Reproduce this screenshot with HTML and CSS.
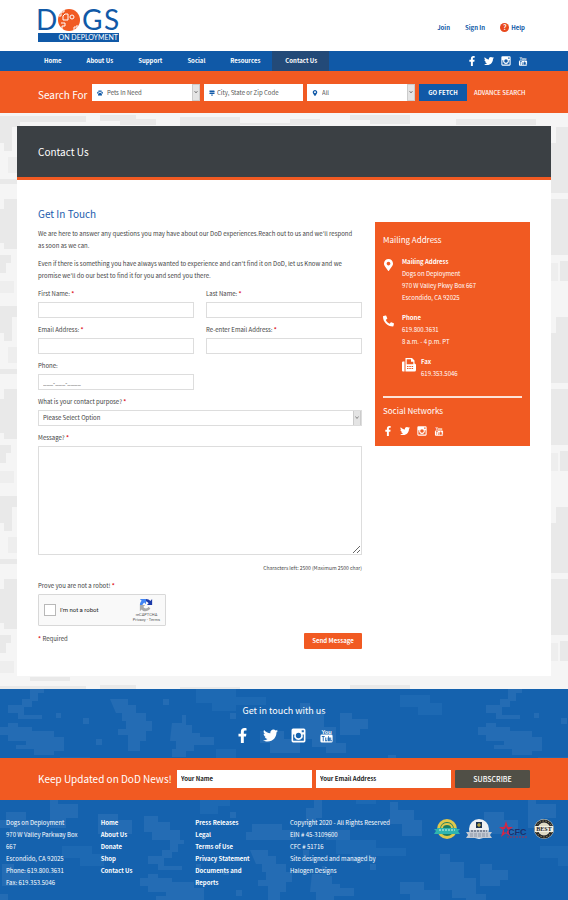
FILE: index.html
```
<!DOCTYPE html>
<html lang="en">
<head>
    <meta charset="UTF-8">
    <meta name="viewport" content="width=device-width, initial-scale=1.0">
    <title>Contact Us - Dogs on Deployment</title>
    <link rel="stylesheet" href="styles.css">
</head>
<body>
    <!-- Icon sprite -->
    <svg class="sprite" aria-hidden="true">
        <symbol id="facebook" viewBox="-96 0 512 512">
            <path d="M279.14 288l14.22-92.66h-88.91v-60.13c0-25.35 12.42-50.06 52.24-50.06h40.42V6.26S260.43 0 225.36 0c-73.22 0-121.08 44.38-121.08 124.72v70.62H22.89V288h81.39v224h100.17V288z"/>
        </symbol>
        <symbol id="twitter" viewBox="0 0 512 512">
            <path d="M459.37 151.716c.325 4.548.325 9.097.325 13.645 0 138.72-105.583 298.558-298.558 298.558-59.452 0-114.68-17.219-161.137-47.106 8.447.974 16.568 1.299 25.34 1.299 49.055 0 94.213-16.568 130.274-44.832-46.132-.975-84.792-31.188-98.112-72.772 6.498.974 12.995 1.624 19.818 1.624 9.421 0 18.843-1.3 27.614-3.573-48.081-9.747-84.143-51.98-84.143-102.985v-1.299c13.969 7.797 30.214 12.67 47.431 13.319-28.264-18.843-46.781-51.005-46.781-87.391 0-19.492 5.197-37.36 14.294-52.954 51.655 63.675 129.3 105.258 216.365 109.807-1.624-7.797-2.599-15.918-2.599-24.04 0-57.828 46.782-104.934 104.934-104.934 30.213 0 57.502 12.67 76.67 33.137 23.715-4.548 46.456-13.32 66.599-25.34-7.798 24.366-24.366 44.833-46.132 57.827 21.117-2.273 41.584-8.122 60.426-16.243-14.292 20.791-32.161 39.308-52.628 54.253z"/>
        </symbol>
        <symbol id="instagram" viewBox="0 0 14 14">
            <path fill-rule="evenodd" d="M2 .5h10A1.500 1.500 0 0 1 13.500 2v10a1.500 1.500 0 0 1-1.500 1.500H2A1.500 1.500 0 0 1 .5 12V2A1.500 1.500 0 0 1 2 .5zM2 6v5.500q0 .5.5.5h9q.5 0 .5-.5V6h-1.200a4 4 0 1 1-7.600 0zM10 2v2h2V2zM7 4.500a2.500 2.500 0 1 0 0 5 2.500 2.500 0 0 0 0-5z"/>
        </symbol>
        <symbol id="youtube" viewBox="0 0 14 16">
            <text class="yt-word" x="7" y="6" text-anchor="middle">You</text>
            <path fill-rule="evenodd" d="M2 7h10q1.500 0 1.500 1.500v5.500q0 1.500-1.500 1.500H2Q.5 15.500.5 14V8.500Q.5 7 2 7zM2 8.500v1h1V14h1V9.500h1v-1zM5.500 10v4H8v-4h-.8v3h-.9v-3zM8.600 8.500V14h2v-4H9.400V8.500zM11 10v4h1.800v-1H12v-3z"/>
        </symbol>
        <symbol id="marker" viewBox="0 0 384 512">
            <path d="M172.268 501.670C26.970 291.031 0 269.413 0 192 0 85.961 85.961 0 192 0s192 85.961 192 192c0 77.413-26.970 99.031-172.268 309.670-9.535 13.774-29.930 13.773-39.464 0zM192 272c44.183 0 80-35.817 80-80s-35.817-80-80-80-80 35.817-80 80 35.817 80 80 80z"/>
        </symbol>
        <symbol id="phone" viewBox="0 0 512 512">
            <path transform="matrix(-1 0 0 1 512 0)" d="M493.400 24.600l-104-24c-11.300-2.600-22.900 3.300-27.500 13.900l-48 112c-4.200 9.800-1.400 21.300 6.900 28l60.600 49.600c-36 76.700-98.900 140.500-177.200 177.200l-49.600-60.600c-6.800-8.300-18.200-11.100-28-6.900l-112 48C3.900 366.500-2 378.100.6 389.400l24 104C27.100 504.200 36.700 512 48 512c256.100 0 464-207.500 464-464 0-11.200-7.700-20.900-18.600-23.400z"/>
        </symbol>
        <symbol id="fax" viewBox="0 0 14 14">
            <path fill-rule="evenodd" d="M1 3.500h1.500v10H1q-1 0-1-1v-8q0-1 1-1zM3.500 0H10l2.500 2.500v3q1.500.3 1.500 1.500v5q0 1.500-1.500 1.500h-9zM4.700 1.200v5h6.600V3.700H9V1.200zM5 8v1h1.500V8zM7.300 8v1h1.500V8zM9.600 8v1h1.500V8zM5 10v1h1.500v-1zM7.300 10v1h1.500v-1zM9.600 10v1h1.500v-1z"/>
        </symbol>
        <symbol id="paw" viewBox="0 0 12 12">
            <ellipse cx="1.800" cy="5.500" rx="1.500" ry="2"/>
            <ellipse cx="4.300" cy="2.300" rx="1.500" ry="2"/>
            <ellipse cx="7.700" cy="2.300" rx="1.500" ry="2"/>
            <ellipse cx="10.200" cy="5.500" rx="1.500" ry="2"/>
            <path d="M6 5.500c2 0 4 2.500 4 4.300s-2 1.700-4 1.200c-2 .5-4 .6-4-1.200S4 5.500 6 5.500z"/>
        </symbol>
        <symbol id="signs" viewBox="0 0 12 12">
            <path d="M1 1h9l2 1.500L10 4H1zM2 5h9v3H2L0 6.500zM5 8.500h2V12H5z"/>
        </symbol>
    </svg>

    <!-- Header -->
    <header class="header">
        <a href="#" aria-label="Dogs on Deployment">
            <svg class="logo" viewBox="0 0 82 34">
                <g class="logo-name">
                    <text x="-2" y="22">D</text>
                    <text x="44" y="22">G</text>
                    <text x="66" y="22">S</text>
                </g>
                <circle cx="31" cy="12" r="11" fill="#f15a22"/>
                <g fill="none" stroke="#fff">
                    <path d="M26 1v3h-3v4h-2M27 6h3v6h-5v-4zM23 15h4v3h-3v4M36 22v-3h3v-2"/>
                    <circle cx="34" cy="9" r="2"/>
                </g>
                <rect x="0" y="25" width="81" height="9" fill="#1059a7"/>
                <text class="logo-sub" x="80" y="32" text-anchor="end">ON DEPLOYMENT</text>
            </svg>
        </a>
        <div class="account">
            <a href="#">Join</a>
            <a href="#">Sign In</a>
            <a href="#" class="help"><span class="help-mark">?</span>Help</a>
        </div>
    </header>

    <!-- Navigation -->
    <nav class="nav">
        <div class="menu">
            <a href="#">Home</a>
            <a href="#">About Us</a>
            <a href="#">Support</a>
            <a href="#">Social</a>
            <a href="#">Resources</a>
            <a href="#" class="active">Contact Us</a>
        </div>
        <div class="social social-nav">
            <a href="#" aria-label="Facebook"><svg><use href="#facebook"/></svg></a>
            <a href="#" aria-label="Twitter"><svg><use href="#twitter"/></svg></a>
            <a href="#" aria-label="Instagram"><svg><use href="#instagram"/></svg></a>
            <a href="#" aria-label="YouTube"><svg><use href="#youtube"/></svg></a>
        </div>
    </nav>

    <!-- Search Bar -->
    <form class="search">
        <h2 class="bar-title">Search For</h2>
        <div class="search-field">
            <svg><use href="#paw"/></svg>
            <select aria-label="Pet type"><option>Pets In Need</option></select>
        </div>
        <div class="search-field">
            <svg><use href="#signs"/></svg>
            <input type="text" placeholder="City, State or Zip Code" aria-label="Location">
        </div>
        <div class="search-field">
            <svg><use href="#marker"/></svg>
            <select aria-label="Distance"><option>All</option></select>
        </div>
        <button type="button" class="fetch">GO FETCH</button>
        <a href="#">ADVANCE SEARCH</a>
    </form>

    <main class="main">
        <div class="panel">
            <div class="page-title"><h1>Contact Us</h1></div>
            <div class="content">
                <form class="contact">
                    <h2>Get In Touch</h2>
                    <p>We are here to answer any questions you may have about our DoD experiences.Reach out to us and we'll respond as soon as we can.</p>
                    <p>Even if there is something you have always wanted to experience and can't find it on DoD, let us Know and we promise we'll do our best to find it for you and send you there.</p>

                    <div class="fields">
                        <div class="field">
                            <label for="first">First Name: <b>*</b></label>
                            <input type="text" id="first">
                        </div>
                        <div class="field">
                            <label for="last">Last Name: <b>*</b></label>
                            <input type="text" id="last">
                        </div>
                        <div class="field">
                            <label for="email">Email Address: <b>*</b></label>
                            <input type="email" id="email">
                        </div>
                        <div class="field">
                            <label for="email2">Re-enter Email Address: <b>*</b></label>
                            <input type="email" id="email2">
                        </div>
                        <div class="field">
                            <label for="tel">Phone:</label>
                            <input type="tel" id="tel" value="___-___-____">
                        </div>
                        <div class="field wide">
                            <label for="purpose">What is your contact purpose? <b>*</b></label>
                            <select id="purpose"><option>Please Select Option</option></select>
                        </div>
                        <div class="field wide">
                            <label for="message">Message? <b>*</b></label>
                            <textarea id="message"></textarea>
                        </div>
                    </div>
                    <div class="counter">Characters left: 2500 (Maximum 2500 char)</div>

                    <div class="prove">Prove you are not a robot! <b>*</b></div>
                    <div class="captcha">
                        <input type="checkbox" id="robot">
                        <label for="robot">I'm not a robot</label>
                        <div class="captcha-brand">
                            <svg viewBox="0 0 16 16">
                                <path fill="#1c3aa9" d="M8 1c2 0 4 1 5 2.500L15 1v7H9l2-2C10 4.500 9 4 8 4z"/>
                                <path fill="#4285f4" d="M8 1v6L6 5C5 6 4 7 4 8H1C1 6 2 4 3 3L1 1z"/>
                                <path fill="#ababab" d="M1 8h6l-2 2c1 2 4 3 6 0l2 2c-3 4-8 4-10 1l-2 2z"/>
                            </svg>
                            <span>reCAPTCHA</span>
                            <span>Privacy - Terms</span>
                        </div>
                    </div>
                    <div class="form-end">
                        <span><b>*</b> Required</span>
                        <button type="button">Send Message</button>
                    </div>
                </form>

                <aside class="sidebar">
                    <h3>Mailing Address</h3>
                    <div class="info">
                        <svg><use href="#marker"/></svg>
                        <div><strong>Mailing Address</strong><br>Dogs on Deployment<br>970 W Valley Pkwy Box 667<br>Escondido, CA 92025</div>
                    </div>
                    <div class="info">
                        <svg><use href="#phone"/></svg>
                        <div><strong>Phone</strong><br>619.800.3631<br>8 a.m. - 4 p.m. PT</div>
                    </div>
                    <div class="info fax">
                        <svg><use href="#fax"/></svg>
                        <div><strong>Fax</strong><br>619.353.5046</div>
                    </div>
                    <hr>
                    <h3>Social Networks</h3>
                    <div class="social social-side">
                        <a href="#" aria-label="Facebook"><svg><use href="#facebook"/></svg></a>
                        <a href="#" aria-label="Twitter"><svg><use href="#twitter"/></svg></a>
                        <a href="#" aria-label="Instagram"><svg><use href="#instagram"/></svg></a>
                        <a href="#" aria-label="YouTube"><svg><use href="#youtube"/></svg></a>
                    </div>
                </aside>
            </div>
        </div>
    </main>

    <!-- Footer -->
    <section class="touch camo">
        <h2>Get in touch with us</h2>
        <div class="social social-big">
            <a href="#" aria-label="Facebook"><svg><use href="#facebook"/></svg></a>
            <a href="#" aria-label="Twitter"><svg><use href="#twitter"/></svg></a>
            <a href="#" aria-label="Instagram"><svg><use href="#instagram"/></svg></a>
            <a href="#" aria-label="YouTube"><svg><use href="#youtube"/></svg></a>
        </div>
    </section>

    <form class="newsletter">
        <h2 class="bar-title">Keep Updated on DoD News!</h2>
        <input type="text" placeholder="Your Name" aria-label="Your Name">
        <input type="email" placeholder="Your Email Address" aria-label="Your Email Address">
        <button type="button">SUBSCRIBE</button>
    </form>

    <footer class="footer camo">
        <div>Dogs on Deployment<br>970 W Valley Parkway Box<br>667<br>Escondido, CA 92025<br>Phone: 619.800.3631<br>Fax: 619.353.5046</div>
        <div class="links">
            <a href="#">Home</a>
            <a href="#">About Us</a>
            <a href="#">Donate</a>
            <a href="#">Shop</a>
            <a href="#">Contact Us</a>
        </div>
        <div class="links">
            <a href="#">Press Releases</a>
            <a href="#">Legal</a>
            <a href="#">Terms of Use</a>
            <a href="#">Privacy Statement</a>
            <a href="#">Documents and<br>Reports</a>
        </div>
        <div>Copyright 2020 - All Rights Reserved<br>EIN # 45-3109600<br>CFC # 51716<br>Site designed and managed by<br>Halogen Designs</div>
        <div class="badges">
            <svg viewBox="0 0 26 20">
                <circle cx="13" cy="10" r="10" fill="#e0c84c"/>
                <circle cx="13" cy="10" r="7" fill="#1b7d63"/>
                <path d="M7 9a6 5 0 0 1 12 0z" fill="#e0c84c"/>
                <path d="M9 9a4 3 0 0 1 8 0z" fill="#1b7d63"/>
                <path d="M0 10h3v-1h20v1h3l-2 2 2 3H0l2-3z" fill="#2fb4b0"/>
                <path d="M5 11h16" stroke="#d6f2e8" stroke-dasharray="2 1"/>
            </svg>
            <svg viewBox="0 0 26 20">
                <circle cx="13" cy="10" r="10" fill="#eef0f2"/>
                <rect x="10" y="3" width="6" height="6" fill="#1e3350"/>
                <path d="M11 6h4M13 4v4" stroke="#e3c542"/>
                <path d="M0 13h4v-2h18v2h4l-2 3 2 3H0l2-3z" fill="#c3c9d3"/>
                <path d="M5 12h16" stroke="#34435c" stroke-dasharray="2 1"/>
                <path d="M4 15h18M4 17h18" stroke="#8b95a6" stroke-dasharray="3 1"/>
            </svg>
            <svg viewBox="0 0 30 20">
                <path d="M8 2l2 6h5l-4 3 1 6-4-3-5 4 2-7-4-3h5z" fill="#d32745"/>
                <path d="M8 7l1 3 2 1-2 1v2l-2-1-1 1v-3l-1-1h2z" fill="#1562ae"/>
                <text class="cfc" x="10" y="16">CFC</text>
                <path d="M9 18h20" stroke="#a33150" stroke-dasharray="2 1"/>
            </svg>
            <svg viewBox="0 0 20 20">
                <circle cx="10" cy="10" r="10" fill="#ded9c4"/>
                <circle cx="10" cy="10" r="8" fill="none" stroke="#22242a" stroke-width="3"/>
                <circle cx="10" cy="10" r="8" fill="none" stroke="#d9c370" stroke-dasharray="1 2"/>
                <rect x="1" y="7" width="18" height="6" fill="#f2efe2"/>
                <text class="best" x="10" y="12" text-anchor="middle">BEST</text>
            </svg>
        </div>
    </footer>
</body>
</html>
```

FILE: styles.css
```
/* General Styles */
* {
    box-sizing: border-box;
}
body {
    margin: 0;
    font-family: "Noto Sans CJK JP", "Noto Sans", sans-serif;
    font-size: 6px;
    line-height: 12px;
    color: #444;
    background: #fff;
}
h1, h2, h3, p {
    margin: 0;
    font-weight: 400;
}
a {
    color: inherit;
    text-decoration: none;
}
b {
    color: #e0202a;
    font-weight: 700;
}
input, select, textarea, button {
    font: inherit;
    color: inherit;
    border: 0;
    border-radius: 0;
    margin: 0;
    padding: 0;
    min-width: 0;
}
svg {
    display: block;
    fill: currentColor;
    overflow: visible;
}
.sprite {
    position: absolute;
    width: 0;
    height: 0;
}
.yt-word {
    font: bold 6px "Liberation Sans", sans-serif;
}

/* Header */
.header {
    display: flex;
    justify-content: space-between;
    height: 51px;
    padding: 8px 43px 0 38px;
}
.logo {
    width: 82px;
    height: 34px;
}
.logo-name {
    font: 28px Lato, sans-serif;
    fill: #1059a7;
}
.logo-sub {
    font: 7px Lato, sans-serif;
    fill: #fff;
}
.account {
    display: flex;
    gap: 15px;
    padding-top: 14px;
    font-weight: 700;
    color: #1059a7;
}
.help {
    display: flex;
    gap: 2px;
}
.help-mark {
    width: 9px;
    height: 9px;
    margin-top: 1px;
    border-radius: 50%;
    background: #e8491d;
    color: #fff;
    font-size: 7px;
    line-height: 9px;
    text-align: center;
}

/* Navigation */
.nav {
    display: flex;
    justify-content: space-between;
    padding: 0 40px 0 31px;
    background: #1059a7;
    color: #fff;
}
.menu {
    display: flex;
    font-weight: 700;
    line-height: 20px;
}
.menu a {
    padding: 0 12px 0 13px;
}
.menu .active {
    background: #234a78;
}
.social {
    display: flex;
    align-items: center;
    gap: 7px;
}
.social svg {
    width: 10px;
    height: 10px;
}

/* Search Bar */
.search {
    display: grid;
    grid-template-columns: 50px 108fr 99fr 108fr 48px 59px;
    gap: 4px;
    align-items: center;
    padding: 13px 38px 12px;
    background: #f15a22;
    color: #fff;
}
.bar-title {
    font-size: 10px;
    line-height: 18px;
    white-space: nowrap;
}
.search .bar-title {
    padding-top: 5px;
    line-height: 12px;
}
.search-field {
    display: flex;
    align-items: center;
    height: 17px;
    background: #fff;
    color: #555;
}
.search-field svg {
    width: 6px;
    height: 6px;
    margin: 0 2px 0 5px;
    color: #1059a7;
    flex: none;
}
.search-field input,
.search-field select {
    width: 100%;
    height: 17px;
    background-color: transparent;
}
.search-field select {
    padding-left: 2px;
}
.search a {
    padding-left: 3px;
    font-weight: 500;
    white-space: nowrap;
}
.fetch {
    height: 17px;
    background: #1059a7;
    color: #fff;
    font-weight: 700;
}
::placeholder {
    color: inherit;
    opacity: 1;
}
select {
    appearance: none;
    background: #fff url("data:image/svg+xml,%3Csvg xmlns='http://www.w3.org/2000/svg' width='8' height='17'%3E%3Crect x='.5' y='.5' width='7' height='16' fill='%23e4e4e4' stroke='%23ccc'/%3E%3Cpath d='M2.500 7l1.500 2 1.500-2' fill='none' stroke='%23888'/%3E%3C/svg%3E") no-repeat right center;
}

/* Page */
.main {
    padding: 13px 3%;
    background: #f5f5f5 url("data:image/svg+xml,%3Csvg xmlns='http://www.w3.org/2000/svg' width='568' height='190'%3E%3Cpath fill='%23e9e9e9' d='M0 3h86v6H20v5h-8v24H4v-8H0zM100 2h36v4h20v6h-36v-4h-20zM180 4h60v6h50v-4h30v6h-80v3h-60zM350 2h60v9h-40v-4h-20zM456 6h80v6h-80zM556 14h12v66h-17V30h5zM0 66h17v5H0zM4 86h13v50H4v-6H0v-34h4zM0 142h11v8H6v10H0zM551 86h17v56h-17zM560 148h8v20h-8zM30 184h40v4H30zM70 178h100v4H70zM190 176h120v6H190zM380 176h160v7H380z'/%3E%3Cpath fill='%23eee' d='M8 44h9v16H8zM551 150h7v18h-7zM0 168h14v12H0z'/%3E%3C/svg%3E");
}
.panel {
    background: #fff;
}
.page-title {
    padding: 17px 21px;
    background: #3b4044;
    border-bottom: 3px solid #f15a22;
    color: #fff;
}
.page-title h1 {
    font-size: 10px;
    line-height: 17px;
}
.content {
    display: grid;
    grid-template-columns: 324fr 155fr;
    gap: 13px;
    align-items: start;
    padding: 26px 21px 27px;
}

/* Contact Form */
.contact h2 {
    margin-bottom: 6px;
    font-size: 10px;
    line-height: 16px;
    color: #1c5cad;
}
.contact p {
    margin-bottom: 6px;
    padding-right: 6px;
}
.fields {
    display: grid;
    grid-template-columns: 1fr 1fr;
    gap: 6px 12px;
}
.field label {
    display: block;
    margin-bottom: 2px;
}
.field input,
.field select,
.field textarea {
    display: block;
    width: 100%;
    height: 16px;
    padding: 0 4px;
    border: 1px solid #ddd;
}
.field:nth-child(5),
.wide {
    grid-column-start: 1;
}
.wide {
    grid-column-end: 3;
}
.field textarea {
    height: 109px;
}
.counter {
    margin: 7px 0 6px;
    font-size: 5px;
    text-align: right;
}
.prove {
    margin-bottom: 2px;
}
.captcha {
    display: flex;
    align-items: center;
    width: 128px;
    height: 32px;
    padding: 0 5px;
    background: #f9f9f9;
    border: 1px solid #d8d8d8;
    border-radius: 1px;
    color: #222;
}
.captcha label {
    font-family: Roboto, sans-serif;
}
.captcha input {
    appearance: none;
    width: 12px;
    height: 12px;
    margin-right: 4px;
    background: #fff;
    border: 1px solid #b8b8b8;
}
.captcha-brand {
    display: flex;
    flex-direction: column;
    align-items: center;
    margin-left: auto;
    font: 4px/5px Roboto, sans-serif;
    color: #555;
}
.captcha-brand svg {
    width: 14px;
    height: 14px;
}
.form-end {
    display: flex;
    justify-content: space-between;
    padding-top: 7px;
}
.form-end button {
    width: 58px;
    height: 16px;
    background: #f15a22;
    border-radius: 1px;
    color: #fff;
    font-weight: 700;
}

/* Sidebar */
.sidebar {
    margin-top: 16px;
    padding: 10px 8px;
    background: #f15a22;
    color: #fff;
}
.sidebar h3 {
    font-size: 8px;
    line-height: 16px;
}
.info {
    display: flex;
    gap: 8px;
    margin-top: 8px;
}
.info svg {
    width: 11px;
    height: 12px;
    margin-top: 3px;
    flex: none;
}
.info strong {
    font-weight: 700;
}
.fax {
    gap: 5px;
    padding-left: 19px;
}
.fax svg {
    width: 14px;
    height: 14px;
    margin-top: 2px;
}
.sidebar hr {
    height: 2px;
    margin: 16px 0 5px;
    border: 0;
    background: #fde3d8;
}
.social-side {
    padding-top: 7px;
}

/* Blue Sections */
.camo {
    color: #fff;
    background: #1562ae url("data:image/svg+xml,%3Csvg xmlns='http://www.w3.org/2000/svg' width='478' height='110'%3E%3Cpath fill='%23246cb4' d='M30 0h14v4h-6v8h-6v6h-8v8h18v4H18v-6H8v-8h14v-6h8zM8 34h10v4h14v4h22v6h10v14H54v4H34v-6H16v-4h10v-4H8v-6H0V38h8zM56 24h5v5h-5zM83 29h6v6h-6zM96 50h6v6h-6zM110 10h18v6h8v8h10v8h6v10h-6v10h-6v10h-12V46h-10v-6h8v-8h-4v-8h-6zM163 10h6v6h-6zM172 34h10v-8h4v10h6v8h8v4h14v8h-20v6h-8v6h-14v-8h4v-8h-6zM230 24h6v6h-6zM300 14h10v8h14v16h12v16h10v10h-20v-6h-14v-8h-12zM260 42h24v8h16v14h-30v-10h-10zM340 24h12v6h16v10h-8v6h-20zM4 86h14v6h12v8h10v10H12v-8H4zM90 82h6v6h-6zM112 94h30v6h14v10h-50v-8h6zM166 78h8v-8h8v18h-6v6h-10zM190 100h20v10h-24v-6h4zM250 72h8v8h16v10h8v16h-20v-12h-12zM334 90h10v-8h20v8h14v14h-30v-6h-14zM388 66h8v8h20v14h-12v10h-16zM436 84h20v6h14v14h-34z'/%3E%3Cpath fill='%231d69b3' d='M196 0h40v8h30v8h-30v6h-24v-8h-16zM60 68h30v8h-12v8H60zM400 6h30v8h12v12h-24v-8h-18zM216 60h20v14h-20z'/%3E%3C/svg%3E");
}
.touch {
    padding: 14px 38px 15px;
    text-align: center;
}
.touch h2 {
    font-size: 9px;
    line-height: 16px;
}
.social-big {
    justify-content: center;
    gap: 13px;
    padding-top: 9px;
}
.social-big svg {
    width: 15px;
    height: 15px;
}
.newsletter {
    display: grid;
    grid-template-columns: 135px 1fr 1fr 75px;
    gap: 4px;
    padding: 12px 38px;
    background: #f15a22;
    color: #fff;
}
.newsletter input {
    padding: 0 4px;
    background: #fff;
    color: #222;
    font-weight: 700;
}
.newsletter button {
    background: #504f46;
    border-radius: 1px;
    font-size: 7px;
    font-weight: 500;
}
.footer {
    display: grid;
    grid-template-columns: 2fr 2fr 2fr 3fr 3fr;
    min-height: 100px;
    padding: 17px 0 11px;
    background-position: 140px 40px;
}
.footer > div {
    padding: 0 6px;
}
.links {
    font-weight: 700;
}
.links a {
    display: block;
}
.footer .badges {
    display: flex;
    justify-content: flex-end;
    gap: 6px;
    padding: 2px 14px 0 0;
}
.badges svg {
    height: 20px;
    flex: none;
}
.cfc {
    font: bold 9px "Liberation Sans", sans-serif;
    fill: #1b2f6b;
}
.best {
    font: bold 6px "Liberation Serif", serif;
    fill: #222;
}
```
